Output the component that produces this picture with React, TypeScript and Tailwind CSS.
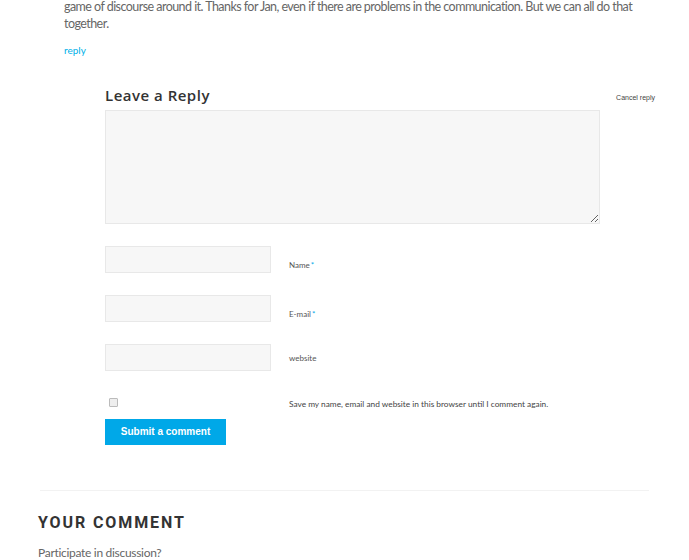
import React from "react";

const body = { fontFamily: "Lato, 'Open Sans', sans-serif" };

const Field = ({
  label,
  required,
  offset,
}: {
  label: string;
  required?: boolean;
  offset: string;
}) => (
  <div className="flex items-end gap-[18px]">
    <input
      type="text"
      className="h-[27px] w-[166px] border border-[#e8e8e8] bg-[#f7f7f7] outline-none"
    />
    <label className={`${offset} text-[8px] text-[#555]`} style={body}>
      {label}
      {required && <span className="ml-[1px] align-top text-[#00a8e8]">*</span>}
    </label>
  </div>
);

export default function App() {
  return (
    <div className="h-[560px] w-[689px] overflow-hidden bg-white">
      <div className="pl-[64px] pr-[40px]">
        <p
          className="-mt-[2px] text-[12.5px] leading-[17px] tracking-[-0.55px] text-[#666]"
          style={body}
        >
          game of discourse around it. Thanks for Jan, even if there are problems in the communication. But we can all do that together.
        </p>
        <a className="mt-[11px] block text-[10px] text-[#00b0e8]" style={body}>
          reply
        </a>
      </div>

      <div className="ml-[105px] mt-[26px] w-[550px]">
        <div className="flex items-end justify-between">
          <h3
            className="text-[15px] font-semibold tracking-[0.5px] text-[#333]"
            style={{ fontFamily: "'Open Sans', sans-serif" }}
          >
            Leave a Reply
          </h3>
          <a
            className="pb-[3px] text-[7px] text-[#444]"
            style={{ fontFamily: "'Liberation Sans', Arial, sans-serif" }}
          >
            Cancel reply
          </a>
        </div>
        <textarea className="mt-[3px] block h-[114px] w-[495px] resize-y border border-[#e8e8e8] bg-[#f7f7f7] outline-none" />

        <div className="mt-[22px] flex flex-col gap-[22px]">
          <Field label="Name" required offset="pb-[2px]" />
          <Field label="E-mail" required offset="pb-[2px]" />
          <Field label="website" offset="pb-[7px]" />
        </div>

        <div className="mt-[27px] flex items-end">
          <div className="w-[184px] pb-[4px] pl-[4px]">
            <input
              type="checkbox"
              className="block h-[9px] w-[9px] appearance-none rounded-[1px] border border-[#bbb] bg-[#eee]"
            />
          </div>
          <span className="text-[8.3px] text-[#444]" style={body}>
            Save my name, email and website in this browser until I comment again.
          </span>
        </div>

        <button
          className="mt-[8px] h-[26px] w-[121px] bg-[#00a8e8] text-[10px] font-bold text-white"
          style={{ fontFamily: "'Liberation Sans', Arial, sans-serif" }}
        >
          Submit a comment
        </button>
      </div>

      <div className="mx-[40px] mt-[45px] border-t border-[#f2f2f2]" />

      <div className="px-[38px] pt-[21px]">
        <h2
          className="text-[16px] font-bold leading-[22px] tracking-[1.9px] text-[#333]"
          style={{ fontFamily: "Roboto, sans-serif" }}
        >
          YOUR COMMENT
        </h2>
        <p className="mt-[10px] text-[12px] tracking-[-0.3px] text-[#666]" style={body}>
          Participate in discussion?
        </p>
      </div>
    </div>
  );
}
